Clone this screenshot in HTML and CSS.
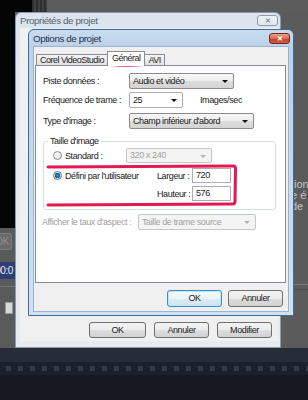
FILE: index.html
```html
<!DOCTYPE html>
<html lang="fr">
<head>
  <meta charset="UTF-8">
  <meta name="viewport" content="width=device-width, initial-scale=1.0">
  <title>Propriétés de projet</title>
  <link rel="stylesheet" href="styles.css">
</head>
<body>
  <!-- application behind the dialogs -->
  <div class="desk">
    <div class="desk-top"><span class="desk-black"></span><span class="desk-hatch"></span></div>
    <div class="desk-main">
      <div class="side-left">
        <div class="preview"></div>
        <div class="tool-btn"><span>OK</span></div>
        <div class="timecode"><span>00:0</span></div>
        <div class="track"></div>
        <div class="track-icon"></div>
      </div>
      <div class="stage">
        <div class="hint">tion<br>e é<br>de</div>
        <div class="stage-rule"></div>
      </div>
    </div>
    <div class="timeline">
      <div class="tl-head"></div>
      <div class="tl-ruler"></div>
      <div class="tl-body"></div>
    </div>
  </div>

  <div class="win win-outer">
    <div class="win-bar">
      <span class="win-title">Propriétés de projet</span>
      <span class="win-close is-idle">&#x2715;</span>
    </div>
    <div class="win-client">
      <div class="btn-row">
        <button class="btn btn-wide">OK</button>
        <button class="btn">Annuler</button>
        <button class="btn">Modifier</button>
      </div>
    </div>
  </div>

  <div class="win win-inner">
    <div class="win-bar">
      <span class="win-title">Options de projet</span>
      <span class="win-close">&#x2715;</span>
    </div>
    <div class="win-client">
      <div class="tabs">
        <span class="tab">Corel VideoStudio</span>
        <span class="tab is-active">Général</span>
        <span class="tab">AVI</span>
      </div>
      <div class="tab-panel">
        <div class="field">
          <label>Piste données :</label>
          <div class="combo combo-l">Audio et vidéo</div>
        </div>
        <div class="field field-2">
          <label>Fréquence de trame :</label>
          <div class="combo combo-s is-edit">25</div>
          <span class="unit">Images/sec</span>
        </div>
        <div class="field field-3">
          <label>Type d'image :</label>
          <div class="combo combo-xl">Champ inférieur d'abord</div>
        </div>

        <fieldset class="group">
          <legend>Taille d'image</legend>
          <div class="group-row">
            <span class="choice choice-a"><span class="radio"></span>Standard :</span>
            <div class="combo combo-m is-off">320 x 240</div>
          </div>
          <div class="group-row row-b">
            <span class="choice choice-b"><span class="radio is-on"></span>Défini par l'utilisateur</span>
            <span class="dim">Largeur :</span>
            <div class="num">720</div>
          </div>
          <div class="group-row row-c">
            <span class="choice-b"></span>
            <span class="dim">Hauteur :</span>
            <div class="num">576</div>
          </div>
        </fieldset>

        <div class="field field-aspect">
          <label class="is-off">Afficher le taux d'aspect :</label>
          <div class="combo combo-aspect is-off">Taille de trame source</div>
        </div>
      </div>
      <div class="btn-row">
        <button class="btn is-default">OK</button>
        <button class="btn">Annuler</button>
      </div>
    </div>
  </div>

  <!-- red marker drawn over the screenshot -->
  <svg class="marks" width="308" height="400" viewBox="0 0 308 400">
    <path d="M110 65 Q127 66.5 144 65" fill="none" stroke="#e4194f" stroke-width="2" stroke-linecap="round"/>
    <path d="M48 167 L233 166 Q235.5 166 235.5 168.5 L235 201.5 Q235 204 232.5 204 L48 205" fill="none" stroke="#e4194f" stroke-width="3" stroke-linecap="round" stroke-linejoin="round"/>
  </svg>
</body>
</html>
```

FILE: styles.css
```css
* {
  box-sizing: border-box;
}
body {
  margin: 0;
  width: 308px;
  height: 400px;
  overflow: hidden;
  position: relative;
  background: #5b5b5b;
  font-family: "Liberation Sans", Arial, sans-serif;
  font-size: 9px;
  letter-spacing: -0.4px;
  color: #1b1b1b;
}

/* background app */
.desk {
  display: flex;
  flex-direction: column;
  height: 400px;
}
.desk-top {
  display: flex;
  height: 12px;
  background: #5c5c5c;
}
.desk-black {
  width: 32px;
  background: #050505;
}
.desk-hatch {
  width: 15px;
  background: repeating-linear-gradient(90deg, #2f2f2f 0 2px, #404040 2px 4px);
}
.desk-main {
  display: flex;
  height: 336px;
}
.side-left {
  width: 15px;
  display: flex;
  flex-direction: column;
  background: #5a5a5a;
}
.preview {
  height: 216px;
  background: #050505;
}
.tool-btn {
  display: flex;
  justify-content: flex-end;
  overflow: hidden;
  margin: 5px 3px 0 0;
  height: 17px;
  border: 1px solid #7c7c7c;
  border-left: none;
  border-radius: 0 3px 3px 0;
  background: #696969;
  color: #8e8e8e;
  font-size: 10px;
  line-height: 15px;
  padding-right: 2px;
}
.timecode {
  display: flex;
  justify-content: flex-end;
  overflow: hidden;
  white-space: nowrap;
  margin-top: 12px;
  height: 17px;
  background: #2c3e72;
  color: #e6ebf6;
  font-size: 10px;
  line-height: 17px;
  padding-right: 2px;
}
.track {
  height: 8px;
  border-bottom: 1px solid #767676;
}
.track-icon {
  width: 8px;
  height: 12px;
  margin: 15px 0 0 5px;
  background: #d8d8d8;
  border: 1px solid #9a9a9a;
}
.stage {
  flex: 1;
  display: flex;
  flex-direction: column;
  align-items: flex-end;
}
.hint {
  width: 17px;
  overflow: hidden;
  white-space: nowrap;
  padding-top: 167px;
  color: #c4c4c4;
  font-size: 11px;
  line-height: 11px;
  letter-spacing: 0;
}
.stage-rule {
  width: 17px;
  height: 6px;
  margin-top: 72px;
  border-top: 1px solid #7a7a7a;
  border-bottom: 1px solid #4c4c4c;
}
.timeline {
  flex: 1;
  display: flex;
  flex-direction: column;
}
.tl-head {
  height: 14px;
  background: #272c3b;
}
.tl-ruler {
  height: 13px;
  background-color: #1c202e;
  background-image: linear-gradient(90deg, transparent 6px, #343a4b 6px, #343a4b 11px, transparent 11px);
  background-size: 12px 5px;
  background-position: 0 4px;
  background-repeat: repeat-x;
}
.tl-body {
  flex: 1;
  background: #161922;
}

/* windows */
.win {
  position: absolute;
  display: flex;
  flex-direction: column;
  border-radius: 6px 6px 0 0;
}
.win-outer {
  left: 15px;
  top: 12px;
  width: 266px;
  height: 336px;
  border: 1px solid #8c9aa9;
  background: linear-gradient(#dbe4ee, #e3e9ef 60px, #e6ebf0);
  padding: 0 2px 6px 4px;
}
.win-inner {
  left: 28px;
  top: 29px;
  width: 266px;
  height: 287px;
  border: 1px solid #3f6b9b;
  background: linear-gradient(#c9dcf0, #bcd2ea 16px, #c3d7ed 120px, #cfe1f2);
  padding: 0 4px 3px 4px;
}
.win-bar {
  display: flex;
  align-items: center;
  justify-content: space-between;
  height: 16px;
}
.win-outer .win-bar {
  height: 15px;
}
.win-title {
  font-size: 9.8px;
  color: #1f3247;
}
.win-outer .win-title {
  color: #56636f;
}
.win-close {
  width: 21px;
  height: 11px;
  margin-right: -1px;
  border: 1px solid #6e2d21;
  border-radius: 3px;
  background: linear-gradient(#e8a08c, #d66c55 50%, #c3412a 50%, #cf5a40);
  color: #fff;
  font-size: 7px;
  font-weight: bold;
  line-height: 9px;
  text-align: center;
  letter-spacing: 0;
}
.win-close.is-idle {
  margin-right: 0;
  border-color: #8d9aa8;
  background: linear-gradient(#eef2f6, #dfe6ed);
  color: #8593a1;
}
.win-client {
  flex: 1;
  display: flex;
  flex-direction: column;
  background: #f0f0f0;
}
.win-outer .win-client {
  justify-content: flex-end;
  padding: 0 6px 3px 0;
}
.win-inner .win-client {
  border: 1px solid #9fb2c6;
  padding: 4px 2px 0 1px;
}

/* tabs */
.tabs {
  display: flex;
  align-items: flex-end;
  height: 14px;
  margin-left: 1px;
}
.tab {
  height: 11px;
  padding: 0 3px;
  margin-right: -1px;
  border: 1px solid #8a8d94;
  border-bottom: none;
  background: linear-gradient(#f5f5f5, #e1e1e1);
  line-height: 10px;
  letter-spacing: -0.5px;
}
.tab.is-active {
  position: relative;
  z-index: 1;
  height: 15px;
  margin-bottom: -1px;
  padding: 0 4px;
  background: #fff;
  line-height: 13px;
}
.tab-panel {
  height: 218px;
  border: 1px solid #898c95;
  background: #fff;
  padding: 7px 0 0 0;
}

/* fields */
.field {
  display: flex;
  align-items: center;
  height: 16px;
  padding-left: 7px;
}
.field label {
  width: 86px;
}
.field-2 {
  margin-top: 3px;
}
.field-3 {
  margin-top: 5px;
}
.unit {
  margin-left: 17px;
}
.combo {
  position: relative;
  height: 16px;
  border: 1px solid #8b8b8b;
  border-radius: 2px;
  background: linear-gradient(#f7f7f7, #ededed 50%, #dddddd 50%, #d3d3d3);
  padding-left: 3px;
  line-height: 14px;
  white-space: nowrap;
}
.combo::after {
  content: "";
  position: absolute;
  right: 5px;
  top: 6px;
  border-style: solid;
  border-width: 3px 3px 0;
  border-color: #111 transparent transparent;
}
.combo.is-edit {
  background: #fff;
  border-color: #a9abb1;
}
.combo.is-off {
  border-color: #c7c7c7;
  background: #f4f4f4;
  color: #a2a2a2;
}
.combo.is-off::after {
  border-top-color: #b2b2b2;
}
.combo-l { width: 105px; }
.combo-s { width: 54px; }
.combo-xl { width: 125px; }
.combo-m { width: 86px; height: 15px; line-height: 13px; }
.combo-aspect { width: 118px; }

.group {
  width: 233px;
  margin: 7px 0 0 7px;
  padding: 2px 0 8px 9px;
  border: 1px solid #d5dfe5;
  border-radius: 3px;
}
.group legend {
  padding: 0 2px;
  margin-left: -5px;
  line-height: 10px;
}
.group-row {
  display: flex;
  align-items: center;
  height: 15px;
}
.row-b {
  margin-top: 5px;
}
.row-c {
  margin-top: 3px;
}
.choice {
  display: flex;
  align-items: center;
  white-space: nowrap;
}
.choice-a {
  width: 73px;
}
.choice-b {
  width: 104px;
}
.radio {
  flex: none;
  width: 9px;
  height: 9px;
  margin-right: 3px;
  border: 1px solid #8d8d8d;
  border-radius: 50%;
  background: radial-gradient(circle at 40% 35%, #ffffff, #d6d6d6);
}
.radio.is-on {
  border-color: #5a7d9c;
  background: radial-gradient(circle, #3ea2dc 0, #16507f 2.5px, #e2e6ea 3px);
}
.dim {
  width: 35px;
}
.num {
  width: 39px;
  height: 15px;
  border: 1px solid #abadb3;
  background: #fff;
  padding-left: 3px;
  line-height: 13px;
}
.field-aspect {
  margin-top: 4px;
  padding-left: 6px;
}
.field-aspect label {
  width: 96px;
  white-space: nowrap;
}
.field label.is-off {
  color: #a0a0a0;
}

/* buttons */
.btn-row {
  display: flex;
  justify-content: flex-end;
  gap: 6px;
}
.win-inner .btn-row {
  margin-top: 7px;
  padding-right: 3px;
}
.win-outer .btn-row {
  gap: 8px;
}
.btn {
  width: 55px;
  height: 17px;
  padding: 0;
  border: 1px solid #707070;
  border-radius: 3px;
  background: linear-gradient(#f3f3f3, #ececec 50%, #dedede 50%, #d1d1d1);
  font: inherit;
  letter-spacing: inherit;
  color: #1b1b1b;
  line-height: 15px;
}
.win-outer .btn {
  height: 16px;
  line-height: 14px;
}
.btn-wide {
  width: 57px;
}
.btn.is-default {
  border-color: #3c8fc1;
  box-shadow: inset 0 0 0 1px #bfe6f8;
  background: linear-gradient(#f5fbfe, #e9f4fa 50%, #dbeaf3 50%, #d2e5f1);
}

.marks {
  position: absolute;
  left: 0;
  top: 0;
  pointer-events: none;
}
```
